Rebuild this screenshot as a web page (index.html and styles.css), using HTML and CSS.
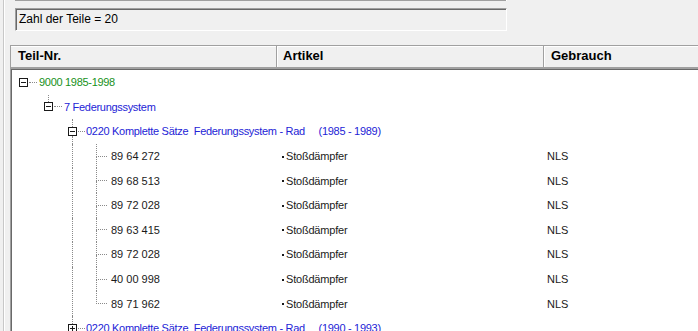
FILE: index.html
```html
<!DOCTYPE html>
<html lang="de">
<head>
    <meta charset="UTF-8">
    <title>Teileliste</title>
    <link rel="stylesheet" href="styles.css">
</head>
<body>
    <div class="page">
        <div class="content">
            <div class="topline"></div>
            <div class="countbox">Zahl der Teile = 20</div>

            <div class="list">
                <div class="list-head">
                    <div class="col-head col-nr">Teil-Nr.</div>
                    <div class="col-head col-art">Artikel</div>
                    <div class="col-head col-use">Gebrauch</div>
                </div>

                <div class="tree">
                    <!-- Ebene 0 -->
                    <div class="row">
                        <div class="cell-tree lvl0">
                            <span class="knot"><span class="box"></span></span>
                            <span class="hdots"></span>
                            <span class="label green">9000 1985-1998</span>
                        </div>
                    </div>
                    <!-- Ebene 1 -->
                    <div class="row">
                        <div class="cell-tree lvl1">
                            <span class="knot"><span class="up"></span><span class="box"></span><span class="down off"></span></span>
                            <span class="hdots"></span>
                            <span class="label blue">7 Federungssystem</span>
                        </div>
                    </div>
                    <!-- Ebene 2 -->
                    <div class="row">
                        <div class="cell-tree lvl2">
                            <span class="knot"><span class="up"></span><span class="box"></span><span class="down"></span></span>
                            <span class="hdots"></span>
                            <span class="label blue">0220 Komplette Sätze  Federungssystem - Rad     (1985 - 1989)</span>
                        </div>
                    </div>

                    <div class="row">
                        <div class="cell-tree lvl3">
                            <span class="guide"></span>
                            <span class="elbow"><span class="e-top"></span><span class="e-bot"></span></span>
                            <span class="label">89 64 272</span>
                        </div>
                        <div class="cell-art"><i class="dot"></i>Stoßdämpfer</div>
                        <div class="cell-use">NLS</div>
                    </div>
                    <div class="row">
                        <div class="cell-tree lvl3">
                            <span class="guide"></span>
                            <span class="elbow"><span class="e-top"></span><span class="e-bot"></span></span>
                            <span class="label">89 68 513</span>
                        </div>
                        <div class="cell-art"><i class="dot"></i>Stoßdämpfer</div>
                        <div class="cell-use">NLS</div>
                    </div>
                    <div class="row">
                        <div class="cell-tree lvl3">
                            <span class="guide"></span>
                            <span class="elbow"><span class="e-top"></span><span class="e-bot"></span></span>
                            <span class="label">89 72 028</span>
                        </div>
                        <div class="cell-art"><i class="dot"></i>Stoßdämpfer</div>
                        <div class="cell-use">NLS</div>
                    </div>
                    <div class="row">
                        <div class="cell-tree lvl3">
                            <span class="guide"></span>
                            <span class="elbow"><span class="e-top"></span><span class="e-bot"></span></span>
                            <span class="label">89 63 415</span>
                        </div>
                        <div class="cell-art"><i class="dot"></i>Stoßdämpfer</div>
                        <div class="cell-use">NLS</div>
                    </div>
                    <div class="row">
                        <div class="cell-tree lvl3">
                            <span class="guide"></span>
                            <span class="elbow"><span class="e-top"></span><span class="e-bot"></span></span>
                            <span class="label">89 72 028</span>
                        </div>
                        <div class="cell-art"><i class="dot"></i>Stoßdämpfer</div>
                        <div class="cell-use">NLS</div>
                    </div>
                    <div class="row">
                        <div class="cell-tree lvl3">
                            <span class="guide"></span>
                            <span class="elbow"><span class="e-top"></span><span class="e-bot"></span></span>
                            <span class="label">40 00 998</span>
                        </div>
                        <div class="cell-art"><i class="dot"></i>Stoßdämpfer</div>
                        <div class="cell-use">NLS</div>
                    </div>
                    <div class="row">
                        <div class="cell-tree lvl3">
                            <span class="guide"></span>
                            <span class="elbow last"><span class="e-top"></span><span class="e-bot"></span></span>
                            <span class="label">89 71 962</span>
                        </div>
                        <div class="cell-art"><i class="dot"></i>Stoßdämpfer</div>
                        <div class="cell-use">NLS</div>
                    </div>

                    <div class="row">
                        <div class="cell-tree lvl2">
                            <span class="knot"><span class="up"></span><span class="box plus"></span><span class="down"></span></span>
                            <span class="hdots"></span>
                            <span class="label blue">0220 Komplette Sätze  Federungssystem - Rad     (1990 - 1993)</span>
                        </div>
                    </div>
                </div>
            </div>
        </div>
    </div>
</body>
</html>
```

FILE: styles.css
```css
/* Reset & Global Styles */
* {
    margin: 0;
    padding: 0;
    box-sizing: border-box;
}
html, body {
    height: 100%;
    overflow: hidden;
}
body {
    background: #f0f0f0;
    font-family: 'Liberation Sans', Arial, sans-serif;
    font-size: 11px;
    color: #1a1a1a;
}
.page {
    height: 100%;
    padding-left: 3px;
}
.content {
    height: 100%;
    display: flex;
    flex-direction: column;
    border-left: 1px solid #c8c8c8;
    box-shadow: inset 1px 0 #fff;
}

/* Top area */
.topline {
    flex-shrink: 0;
    margin-left: 11px;
    width: 492px;
    height: 1px;
    background: #a0a0a0;
    border-right: 1px solid #fff;
}
.countbox {
    flex-shrink: 0;
    margin: 7px 0 0 11px;
    width: 492px;
    height: 23px;
    padding: 3px 0 0 3px;
    border-top: 1px solid #a0a0a0;
    border-left: 1px solid #a0a0a0;
    border-right: 1px solid #fff;
    border-bottom: 1px solid #fff;
    box-shadow: inset 1px 1px #696969;
    font-size: 12px;
    color: #000;
}

/* List view */
.list {
    flex: 1;
    min-height: 0;
    overflow: hidden;
    margin: 14px 0 0 6px;
    border-left: 1px solid #a0a0a0;
    box-shadow: inset 1px 0 #696969;
    background: #fff;
}
.list-head {
    display: flex;
    height: 24px;
    background: #f0f0f0;
    border-top: 1px solid #a0a0a0;
    border-bottom: 2px solid #a0a0a0;
    box-shadow: inset 0 1px #fff, 0 1px #696969;
    padding-left: 1px;
}
.col-head {
    font-size: 13px;
    font-weight: bold;
    color: #000;
    line-height: 20px;
    border-right: 1px solid #a0a0a0;
    box-shadow: 1px 0 #fff;
}
.col-nr {
    width: 265px;
    padding-left: 6px;
}
.col-art {
    width: 266px;
    padding-left: 5px;
    margin-left: 1px;
}
.col-use {
    flex: 1;
    padding-left: 6px;
    margin-left: 1px;
    border-right: none;
}

/* Tree rows */
.tree {
    padding-top: 1px;
    padding-left: 1px;
}
.row {
    display: flex;
    height: 24.6px;
}
.cell-tree {
    display: flex;
    align-items: stretch;
    width: 270px;
    flex-shrink: 0;
    white-space: pre;
}
.cell-tree > * {
    flex-shrink: 0;
}
.lvl0 { padding-left: 7px; }
.lvl1 { padding-left: 32px; }
.lvl2 { padding-left: 56px; }
.lvl3 { padding-left: 60px; }

.label {
    align-self: center;
    line-height: 14px;
}
.green {
    color: #17911a;
    letter-spacing: -0.3px;
}
.blue {
    color: #2323d6;
    letter-spacing: -0.3px;
}

.knot {
    display: flex;
    flex-direction: column;
    align-items: center;
    width: 9px;
}
.knot .up,
.knot .down {
    flex: 1;
    border-left: 1px dotted #8a8a8a;
}
.knot .down.off {
    border-left-color: transparent;
}
.knot:not(:has(.up)) {
    justify-content: center;
}
.box {
    width: 9px;
    height: 9px;
    flex-shrink: 0;
    border: 1px solid #1a1a1a;
    background: linear-gradient(#1a1a1a, #1a1a1a) center / 5px 1px no-repeat, #fff;
}
.box.plus {
    background: linear-gradient(#1a1a1a, #1a1a1a) center / 5px 1px no-repeat,
                linear-gradient(#1a1a1a, #1a1a1a) center / 1px 5px no-repeat, #fff;
}
.hdots {
    align-self: center;
    width: 8px;
    height: 1px;
    margin: 0 2px 0 1px;
    border-top: 1px dotted #8a8a8a;
}
.lvl2 .hdots {
    width: 7px;
    margin-right: 1px;
}

.guide {
    width: 1px;
    border-left: 1px dotted #8a8a8a;
}
.elbow {
    display: flex;
    flex-direction: column;
    width: 11px;
    margin: 0 4px 0 23px;
}
.e-top {
    flex: 1;
    border-left: 1px dotted #8a8a8a;
    border-bottom: 1px dotted #8a8a8a;
}
.e-bot {
    flex: 1;
    border-left: 1px dotted #8a8a8a;
}
.elbow.last .e-bot {
    border-left-color: transparent;
}

.cell-art {
    width: 265px;
    flex-shrink: 0;
    display: flex;
    align-items: center;
    letter-spacing: -0.2px;
}
.cell-use {
    display: flex;
    align-items: center;
}
.dot {
    width: 2px;
    height: 2px;
    background: #1a1a1a;
    margin: 1px 2px 0 0;
}
```
